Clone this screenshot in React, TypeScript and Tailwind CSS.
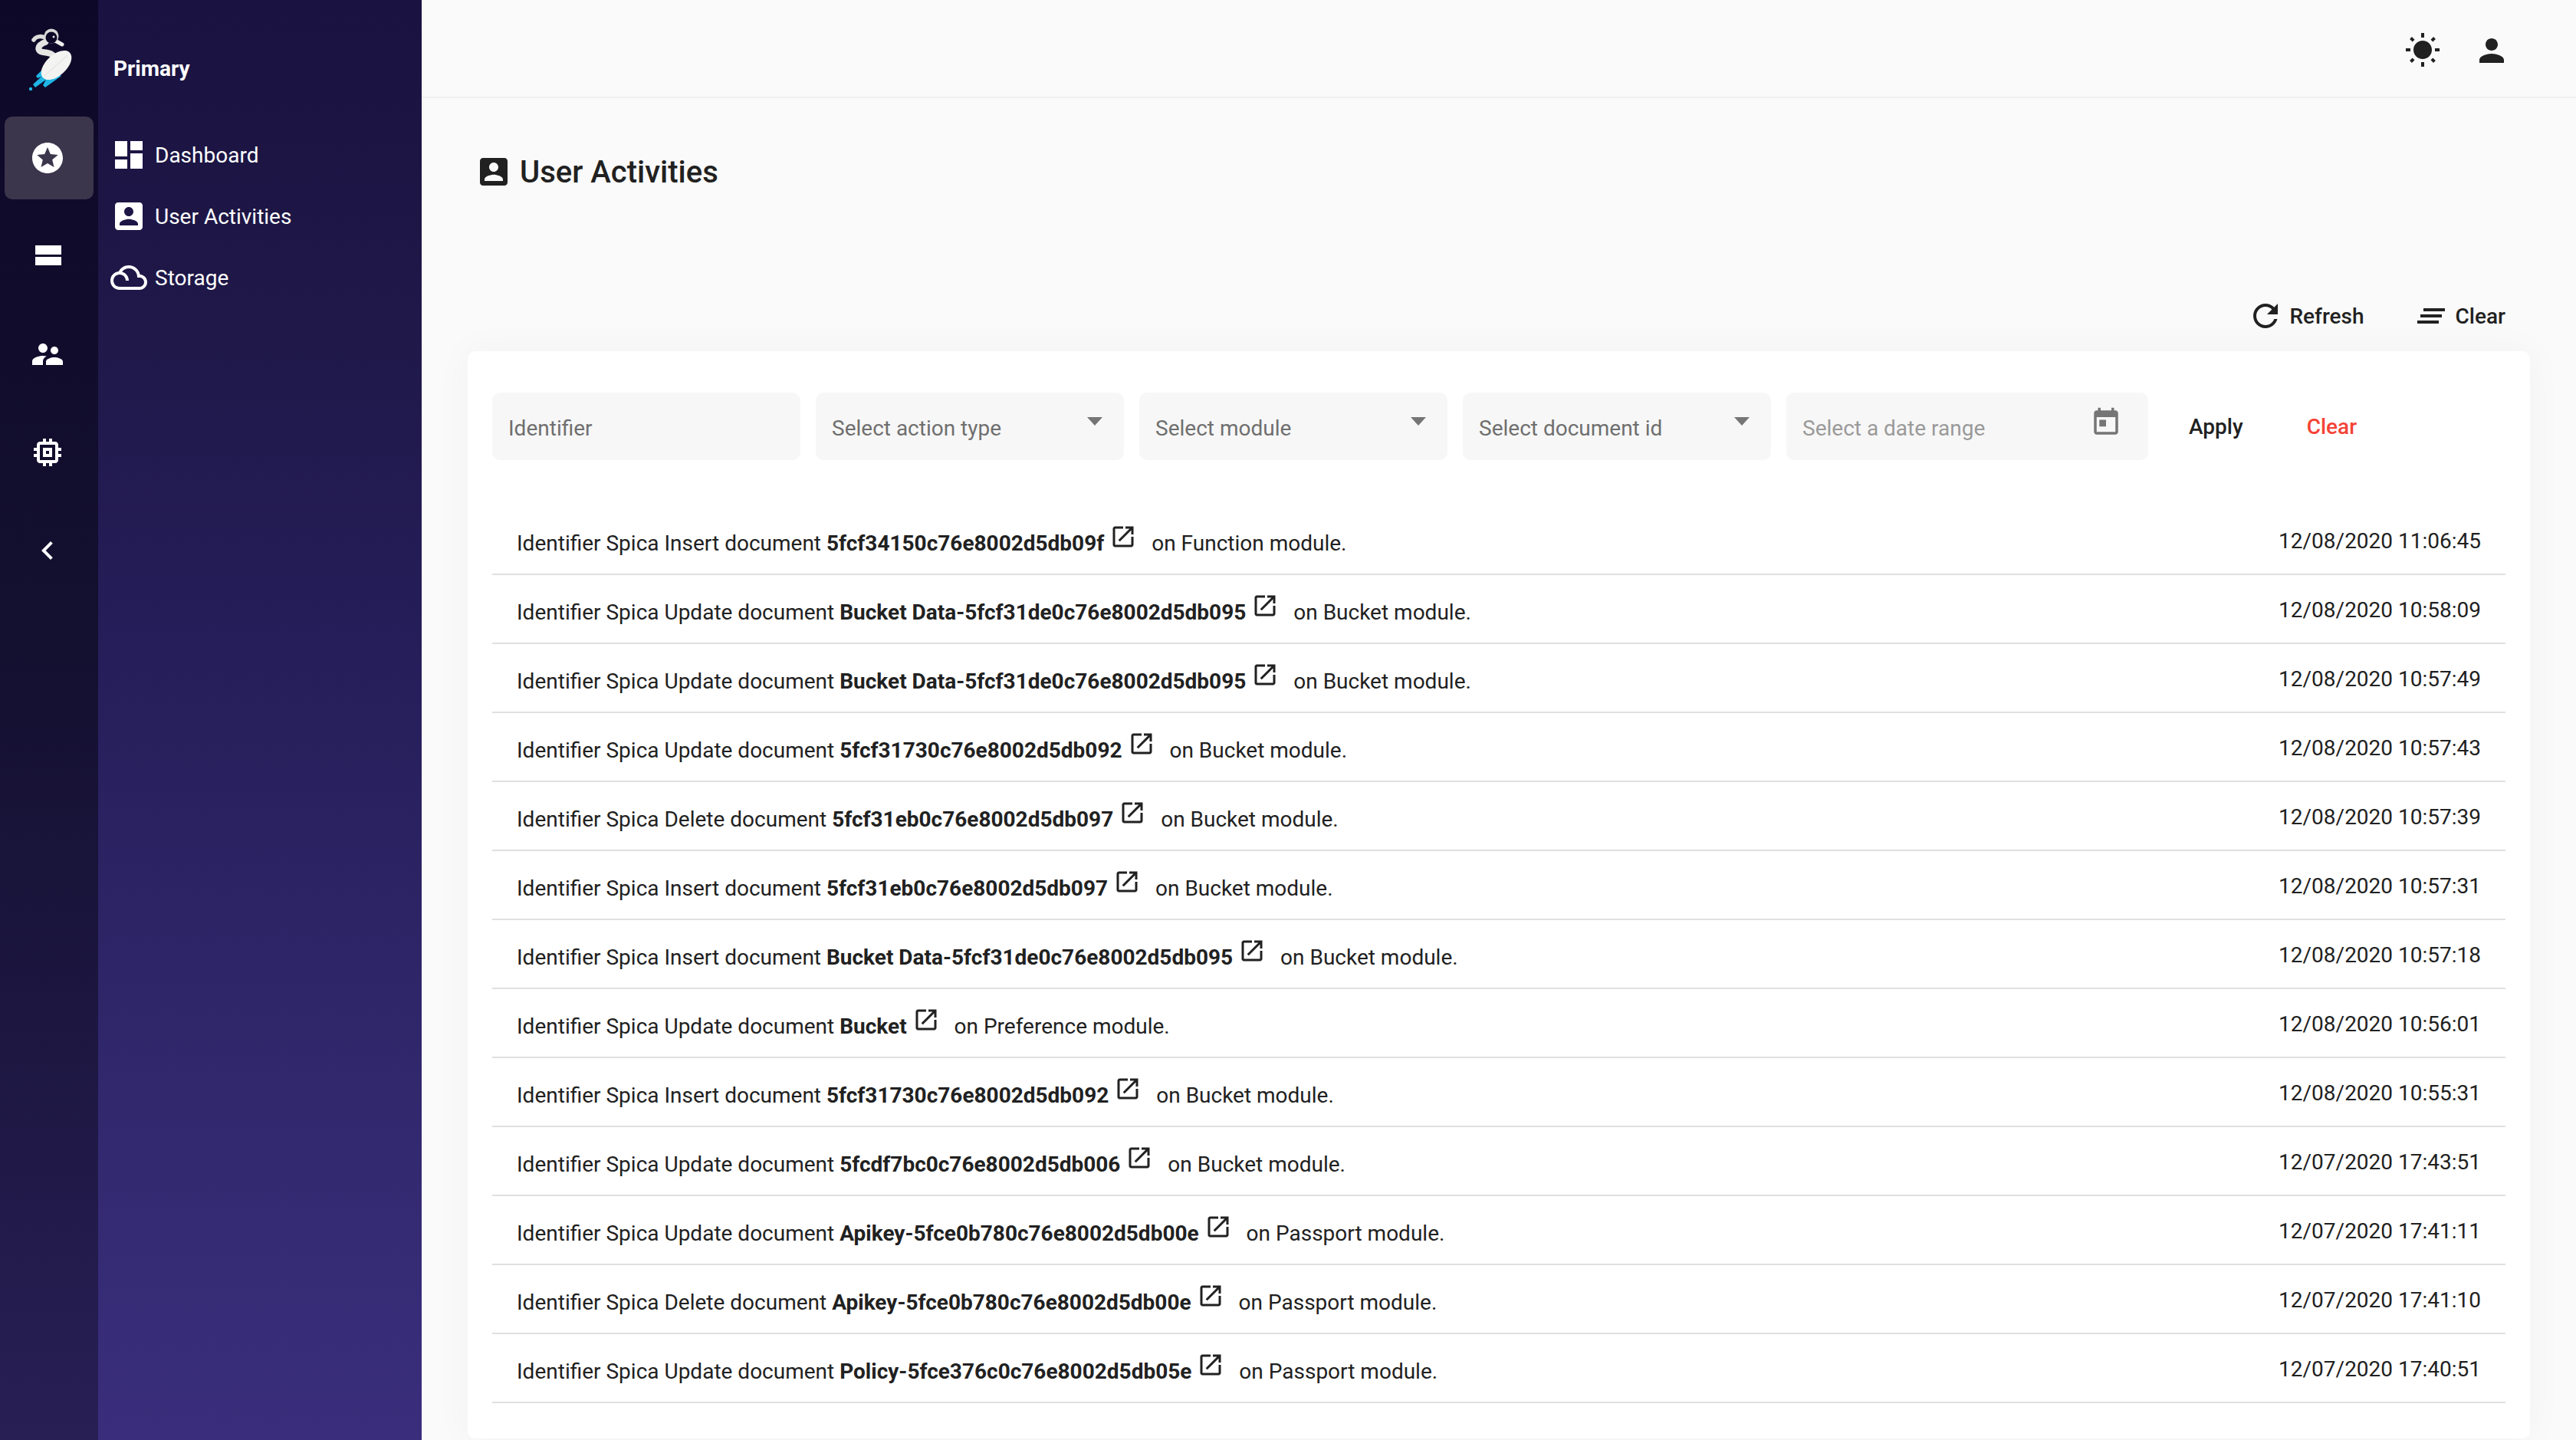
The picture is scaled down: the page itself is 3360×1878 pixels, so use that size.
import React from "react";

const P = {
  stars: "M11.99 2C6.47 2 2 6.48 2 12s4.47 10 9.99 10C17.52 22 22 17.52 22 12S17.52 2 11.99 2zm4.24 16L12 15.45 7.77 18l1.12-4.81-3.73-3.23 4.92-.42L12 5l1.92 4.53 4.92.42-3.73 3.23L16.23 18z",
  stream: "M4 5h17v6H4zM4 12.5h17V18H4z",
  group: "M16.5 12c1.38 0 2.49-1.12 2.49-2.5S17.88 7 16.5 7C15.12 7 14 8.12 14 9.5s1.12 2.5 2.5 2.5zM9 11c1.66 0 2.99-1.34 2.99-3S10.66 5 9 5C7.34 5 6 6.34 6 8s1.34 3 3 3zm7.5 3c-1.83 0-5.5.92-5.5 2.75V19h11v-2.25c0-1.83-3.67-2.75-5.5-2.75zM9 13c-2.33 0-7 1.17-7 3.5V19h7v-2.25c0-.85.33-2.34 2.37-3.47C10.5 13.1 9.66 13 9 13z",
  memory: "M15 9H9v6h6V9zm-2 4h-2v-2h2v2zm8-2V9h-2V7c0-1.1-.9-2-2-2h-2V3h-2v2h-2V3H9v2H7c-1.1 0-2 .9-2 2v2H3v2h2v2H3v2h2v2c0 1.1.9 2 2 2h2v2h2v-2h2v2h2v-2h2c1.1 0 2-.9 2-2v-2h2v-2h-2v-2h2zm-4 6H7V7h10v10z",
  chevron: "M15.41 7.41L14 6l-6 6 6 6 1.41-1.41L10.83 12z",
  dashboard: "M3 13h8V3H3v10zm0 8h8v-6H3v6zm10 0h8V11h-8v10zm0-18v6h8V3h-8z",
  accountBox: "M3 5v14c0 1.1.89 2 2 2h14c1.1 0 2-.9 2-2V5c0-1.1-.9-2-2-2H5c-1.11 0-2 .9-2 2zm12 4c0 1.66-1.34 3-3 3s-3-1.34-3-3 1.34-3 3-3 3 1.34 3 3zm-9 8c0-2 4-3.1 6-3.1s6 1.1 6 3.1v1H6v-1z",
  drama: "M19.35 10.04C18.67 6.59 15.64 4 12 4c-2.97 0-5.38 1.74-6.65 4.04C2.34 8.36 0 10.91 0 14c0 3.31 2.69 6 6 6h13c2.76 0 5-2.24 5-5 0-2.64-2.05-4.78-4.65-4.96zM19 18H6c-2.21 0-4-1.79-4-4s1.79-4 4-4 4 1.79 4 4h2c0-2.76-1.86-5.08-4.4-5.78C8.61 6.88 10.2 6 12 6c3.03 0 5.5 2.47 5.5 5.5v.5H19c1.66 0 3 1.34 3 3s-1.34 3-3 3z",
  sun: "M6.76 4.84l-1.8-1.79-1.41 1.41 1.79 1.79 1.42-1.41zM4 10.5H1v2h3v-2zm9-9.95h-2V3.5h2V.55zm7.45 3.91l-1.41-1.41-1.79 1.79 1.41 1.41 1.79-1.79zm-3.21 13.7l1.79 1.8 1.41-1.41-1.8-1.79-1.4 1.4zM20 10.5v2h3v-2h-3zm-8-5c-3.31 0-6 2.69-6 6s2.69 6 6 6 6-2.69 6-6-2.69-6-6-6zm-1 16.95h2V19.5h-2v2.95zm-7.45-3.91l1.41 1.41 1.79-1.8-1.41-1.41-1.8 1.8z",
  person: "M12 12c2.21 0 4-1.79 4-4s-1.79-4-4-4-4 1.79-4 4 1.79 4 4 4zm0 2c-2.67 0-8 1.34-8 4v2h16v-2c0-2.66-5.33-4-8-4z",
  refresh: "M17.65 6.35C16.2 4.9 14.21 4 12 4c-4.42 0-7.99 3.58-7.99 8s3.57 8 7.99 8c3.73 0 6.84-2.55 7.73-6h-2.08c-.82 2.33-3.04 4-5.65 4-3.31 0-6-2.69-6-6s2.69-6 6-6c1.66 0 3.14.69 4.22 1.78L13 11h7V4l-2.35 2.35z",
  clearAll: "M5 13h14v-2H5v2zm-2 4h14v-2H3v2zM7 7v2h14V7H7z",
  today: "M19 3h-1V1h-2v2H8V1H6v2H5c-1.11 0-1.99.9-1.99 2L3 19c0 1.1.89 2 2 2h14c1.1 0 2-.9 2-2V5c0-1.1-.9-2-2-2zm0 16H5V8h14v11zM7 10h5v5H7z",
  open: "M19 19H5V5h7V3H5c-1.11 0-2 .9-2 2v14c0 1.1.89 2 2 2h14c1.1 0 2-.9 2-2v-7h-2v7zM14 3v2h3.59l-9.83 9.83 1.41 1.41L19 6.41V10h2V3h-7z",
};

function Icon({ d, className }: { d: string; className: string }) {
  return (
    <svg viewBox="0 0 24 24" fill="currentColor" className={className}>
      <path d={d} />
    </svg>
  );
}

function Logo() {
  return (
    <svg viewBox="0 0 130 130" className="w-[130px] h-[130px]">
      <path d="M59 87 L47 99 L49 102 L54 100 L43 110 L46 114 L60 104 L56 111 L59 114 L80 99 Z" fill="#1fb6e6" />
      <circle cx="40" cy="116" r="2.200" fill="#1fb6e6" />
      <path d="M44 52 C48 46 56 47 60 50" stroke="#dcdcd9" strokeWidth="5.500" fill="none" strokeLinecap="round" />
      <path d="M59 55 C48 59 48 67 56 68 C65 69 71 70 72 79" stroke="#e4e4e2" strokeWidth="8" fill="none" strokeLinecap="round" />
      <path d="M72 53 L81 58" stroke="#eeeeec" strokeWidth="5" strokeLinecap="round" />
      <circle cx="67" cy="47" r="9.500" fill="#d8d8d6" />
      <circle cx="67" cy="49" r="7.500" fill="#0d0726" />
      <circle cx="70" cy="48" r="1.500" fill="#e6e6e6" />
      <ellipse cx="73.500" cy="85" rx="24" ry="13.500" transform="rotate(-43 73.500 85)" fill="#f3f3f1" />
      <path d="M58 99 L88 72" stroke="#cfd4d8" strokeWidth="0.700" />
    </svg>
  );
}

const rows: [string, string, string, string][] = [
  ["Insert", "5fcf34150c76e8002d5db09f", "Function", "12/08/2020 11:06:45"],
  ["Update", "Bucket Data-5fcf31de0c76e8002d5db095", "Bucket", "12/08/2020 10:58:09"],
  ["Update", "Bucket Data-5fcf31de0c76e8002d5db095", "Bucket", "12/08/2020 10:57:49"],
  ["Update", "5fcf31730c76e8002d5db092", "Bucket", "12/08/2020 10:57:43"],
  ["Delete", "5fcf31eb0c76e8002d5db097", "Bucket", "12/08/2020 10:57:39"],
  ["Insert", "5fcf31eb0c76e8002d5db097", "Bucket", "12/08/2020 10:57:31"],
  ["Insert", "Bucket Data-5fcf31de0c76e8002d5db095", "Bucket", "12/08/2020 10:57:18"],
  ["Update", "Bucket", "Preference", "12/08/2020 10:56:01"],
  ["Insert", "5fcf31730c76e8002d5db092", "Bucket", "12/08/2020 10:55:31"],
  ["Update", "5fcdf7bc0c76e8002d5db006", "Bucket", "12/07/2020 17:43:51"],
  ["Update", "Apikey-5fce0b780c76e8002d5db00e", "Passport", "12/07/2020 17:41:11"],
  ["Delete", "Apikey-5fce0b780c76e8002d5db00e", "Passport", "12/07/2020 17:41:10"],
  ["Update", "Policy-5fce376c0c76e8002d5db05e", "Passport", "12/07/2020 17:40:51"],
];

function Select({ label }: { label: string }) {
  return (
    <div className="w-[402px] h-[88px] rounded-[10px] bg-[#f7f7f7] relative flex items-center pl-[21px] pt-[6px] text-[#6f6f6f]">
      {label}
      <span className="absolute right-[28px] top-[32px] w-0 h-0 border-l-[10px] border-r-[10px] border-t-[11px] border-l-transparent border-r-transparent border-t-[#757575]" />
    </div>
  );
}

export default function App() {
  const railItems = [P.stream, P.group, P.memory, P.chevron];
  return (
    <div className="flex w-[3360px] h-[1878px] overflow-hidden bg-[#fafafa] text-[28px] text-[#212121] [font-family:Roboto,sans-serif]">
      <aside className="w-[128px] shrink-0 bg-[linear-gradient(180deg,#0e0828_0%,#141030_45%,#1c1640_70%,#281f55_100%)] text-white">
        <div className="h-[152px]">
          <Logo />
        </div>
        <div className="h-[108px] w-[116px] ml-[6px] mb-[20px] rounded-[10px] bg-[#3b364c] flex items-center pl-[32px]">
          <Icon d={P.stars} className="w-[48px] h-[48px]" />
        </div>
        {railItems.map((d, i) => (
          <div key={i} className="h-[108px] w-[116px] ml-[6px] mb-[20px] flex items-center pl-[32px]">
            <Icon d={d} className="w-[48px] h-[48px]" />
          </div>
        ))}
      </aside>
      <nav className="w-[422px] shrink-0 bg-[linear-gradient(180deg,#1a1240_0%,#1f1848_22%,#251d58_43%,#332970_80%,#3a2e7c_100%)] text-white">
        <div className="h-[162px] pt-[72px] pl-[20px] font-bold leading-[36px]">Primary</div>
        {[
          [P.dashboard, "Dashboard"],
          [P.accountBox, "User Activities"],
          [P.drama, "Storage"],
        ].map(([d, t]) => (
          <div key={t} className="h-[80px] flex items-center pl-[16px] gap-[10px]">
            <Icon d={d} className="w-[48px] h-[48px]" />
            <span className="pt-[2px]">{t}</span>
          </div>
        ))}
      </nav>
      <main className="flex-1 min-w-0">
        <header className="h-[128px] border-b-2 border-[#f0f0f0] flex items-center justify-end">
          <Icon d={P.sun} className="w-[48px] h-[48px] mr-[42px] mt-[6px]" />
          <Icon d={P.person} className="w-[48px] h-[48px] mr-[86px] mt-[6px]" />
        </header>
        <div className="pt-[72px] pl-[70px] flex items-center gap-[10px] h-[120px] text-[40px] font-medium">
          <Icon d={P.accountBox} className="w-[48px] h-[48px]" />
          <h1 className="pt-[2px]">User Activities</h1>
        </div>
        <div className="mt-[140px] h-[48px] flex items-center justify-end pr-[92px] font-medium">
          <Icon d={P.refresh} className="w-[48px] h-[48px]" />
          <span className="ml-[7px] pt-[2px]">Refresh</span>
          <Icon d={P.clearAll} className="w-[48px] h-[48px] ml-[63px]" />
          <span className="ml-[8px] pt-[2px]">Clear</span>
        </div>
        <section className="mt-[22px] mx-[60px] h-[1418px] rounded-[10px] bg-white px-[32px] pt-[54px] shadow-[0_0_50px_rgba(0,0,0,0.04)]">
          <div className="flex items-center gap-[20px]">
            <div className="w-[402px] h-[88px] rounded-[10px] bg-[#f7f7f7] flex items-center pl-[21px] pt-[6px] text-[#6f6f6f]">Identifier</div>
            <Select label="Select action type" />
            <Select label="Select module" />
            <Select label="Select document id" />
            <div className="w-[472px] h-[88px] rounded-[10px] bg-[#f7f7f7] relative flex items-center pl-[21px] pt-[6px] text-[#9a9a9a]">
              Select a date range
              <Icon d={P.today} className="absolute right-[34px] top-[18px] w-[42px] h-[42px] text-[#757575]" />
            </div>
            <div className="ml-[33px] flex items-center gap-[83px] pt-[2px] font-medium">
              <span>Apply</span>
              <span className="text-[#f44336]">Clear</span>
            </div>
          </div>
          <div className="mt-[60px]">
            {rows.map(([a, doc, mod, date], i) => (
              <div key={i} className="h-[90px] border-b-2 border-[#e0e0e0] flex items-center justify-between px-[32px]">
                <div className="leading-[42px] pt-[4px]">
                  Identifier Spica {a} document <b className="font-bold">{doc}</b>
                  <Icon d={P.open} className="inline align-baseline w-[36px] h-[36px] ml-[7px] mr-[12px]" /> on {mod} module.
                </div>
                <div className="pt-[3px]">{date}</div>
              </div>
            ))}
          </div>
        </section>
      </main>
    </div>
  );
}
